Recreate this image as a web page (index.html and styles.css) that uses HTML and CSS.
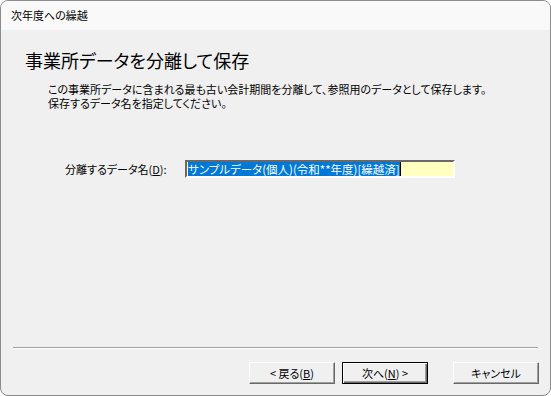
FILE: index.html
```html
<!DOCTYPE html>
<html lang="ja">
<head>
    <meta charset="UTF-8">
    <title>次年度への繰越</title>
    <link rel="stylesheet" href="styles.css">
</head>
<body>
    <div class="window">
        <div class="titlebar">次年度への繰越</div>

        <div class="content">
            <h1 class="heading">事業所データを分離して保存</h1>
            <p class="desc">この事業所データに含まれる最も古い会計期間を分離して、参照用のデータとして保存します。<br>保存するデータ名を指定してください。</p>

            <div class="field">
                <label class="field-label">分離するデータ名(<u>D</u>):</label>
                <div class="textbox">
                    <span class="selected">サンプルデータ(個人)(令和**年度)[繰越済]</span><span class="caret"></span>
                </div>
            </div>
        </div>

        <div class="footer">
            <div class="separator"></div>
            <div class="buttons">
                <button class="btn">&lt; 戻る(<u>B</u>)</button>
                <button class="btn default">次へ(<u>N</u>) &gt;</button>
                <button class="btn cancel">キャンセル</button>
            </div>
        </div>
    </div>
</body>
</html>
```

FILE: styles.css
```css
:root {
    --face: #f0f0f0;
    --title: #f9f9f9;
    --frame: #8c8c8c;
    --shadow: #a0a0a0;
    --dark: #696969;
    --select: #0078d7;
    --input-bg: #ffffc0;
}

* {
    box-sizing: border-box;
}

body {
    margin: 0;
    font-family: "Noto Sans CJK JP", "Noto Sans", sans-serif;
    font-feature-settings: "palt";
    font-size: 11px;
    color: #000;
    background: #fff;
}

.window {
    width: 551px;
    height: 396px;
    border: 1px solid var(--frame);
    border-radius: 8px;
    overflow: hidden;
    background: var(--face);
    display: flex;
    flex-direction: column;
}

.titlebar {
    height: 29px;
    padding-left: 10px;
    line-height: 29px;
    background: var(--title);
}

.content {
    flex: 1;
    padding: 20px 12px 0 24px;
}

.heading {
    margin: 0;
    font-size: 18px;
    font-weight: normal;
    line-height: 20px;
}

.desc {
    margin: 12px 0 0 23px;
    line-height: 14px;
}

.field {
    display: flex;
    align-items: center;
    margin: 50px 0 0 40px;
}

.field-label {
    width: 120px;
}

.textbox {
    width: 270px;
    height: 18px;
    display: flex;
    align-items: center;
    padding-left: 1px;
    background: var(--input-bg);
    border-top: 2px solid var(--dark);
    border-left: 2px solid var(--dark);
    border-bottom: 2px solid #fff;
    border-right: 2px solid #fff;
}

.selected {
    background: var(--select);
    color: #fff;
    font-size: 11.5px;
    line-height: 14px;
    white-space: nowrap;
}

.caret {
    width: 1px;
    height: 14px;
    background: #000;
}

.footer {
    padding: 0 11px 11px 12px;
}

.separator {
    height: 2px;
    margin-right: 1px;
    border-top: 1px solid var(--shadow);
    border-bottom: 1px solid #fff;
}

.buttons {
    display: flex;
    justify-content: flex-end;
    gap: 7px;
    padding-top: 13px;
}

.btn {
    width: 86px;
    height: 22px;
    padding: 0;
    font-family: inherit;
    font-feature-settings: inherit;
    font-size: 11px;
    color: #000;
    background: var(--face);
    border-top: 1px solid #fff;
    border-left: 1px solid #fff;
    border-right: 1px solid var(--dark);
    border-bottom: 1px solid var(--dark);
    box-shadow: inset -1px -1px 0 var(--shadow);
}

.default {
    border: 1px solid #000;
    box-shadow: inset 1px 1px 0 #fff, inset -1px -1px 0 var(--dark), inset -2px -2px 0 var(--shadow);
}

.cancel {
    margin-left: 18px;
}
```
